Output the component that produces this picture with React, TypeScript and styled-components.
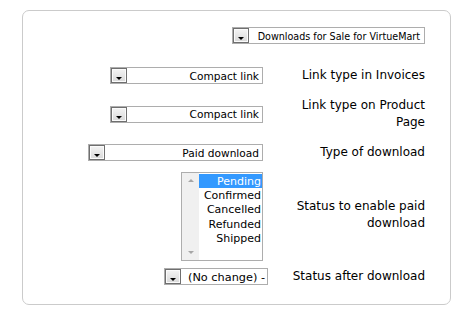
import React from "react";
import styled, { createGlobalStyle } from "styled-components";

const Global = createGlobalStyle`
  html, body { margin: 0; padding: 0; background: #fff; }
  body { font-family: "DejaVu Sans", "Liberation Sans", sans-serif; color: #000; }
`;

const Panel = styled.div`
  box-sizing: border-box;
  width: 429px;
  height: 295px;
  margin: 10px 0 0 22px;
  border: 1px solid #cbcbcb;
  border-radius: 7px;
  padding: 16px 25px 0 0;
  display: flex;
  flex-direction: column;
`;

const TopRow = styled.div`
  display: flex;
  justify-content: flex-end;
`;

const Row = styled.div<{ $mt: number }>`
  display: grid;
  grid-template-columns: 245px 1fr;
  column-gap: 16px;
  align-items: center;
  margin-top: ${(p) => p.$mt}px;
`;

const FieldCell = styled.div<{ $pr: number }>`
  display: flex;
  justify-content: flex-end;
  padding-right: ${(p) => p.$pr}px;
`;

const Label = styled.div<{ $lift?: number }>`
  font-size: 12px;
  line-height: 17px;
  text-align: right;
  margin-bottom: ${(p) => (p.$lift ? p.$lift * 2 : 0)}px;
`;

const SelectBox = styled.div<{ $w: number }>`
  box-sizing: border-box;
  width: ${(p) => p.$w}px;
  height: 17px;
  border: 1px solid #adadad;
  background: #fff;
  display: flex;
  align-items: center;
`;

const DropButton = styled.span`
  box-sizing: border-box;
  flex: none;
  width: 16px;
  height: 15px;
  border: 1px solid #6f6f6f;
  box-shadow: inset 0 0 0 1px #fbfbfb;
  background: linear-gradient(#f4f4f4, #d9d9d9);
  display: flex;
  justify-content: center;
  align-items: flex-end;
  padding-bottom: 2px;
`;

const DownArrow = styled.span`
  width: 0;
  height: 0;
  border-left: 3px solid transparent;
  border-right: 3px solid transparent;
  border-top: 3px solid #000;
`;

const SelectValue = styled.span<{ $size: number; $pr: number }>`
  flex: 1;
  min-width: 0;
  text-align: right;
  font-size: ${(p) => p.$size}px;
  line-height: 15px;
  white-space: nowrap;
  overflow: hidden;
  padding-right: ${(p) => p.$pr}px;
  padding-top: 1px;
`;

const ListBox = styled.div`
  box-sizing: border-box;
  width: 82px;
  height: 89px;
  border: 1px solid #adadad;
  background: #fff;
  display: flex;
`;

const ScrollTrack = styled.div`
  flex: none;
  width: 17px;
  background: #f0f0f0;
  display: flex;
  flex-direction: column;
  justify-content: space-between;
  align-items: center;
  padding: 6px 0 6px;
  box-sizing: border-box;
`;

const ScrollArrow = styled.span<{ $dir: "up" | "down" }>`
  width: 0;
  height: 0;
  border-left: 3px solid transparent;
  border-right: 3px solid transparent;
  ${(p) =>
    p.$dir === "up"
      ? "border-bottom: 3px solid #a6a6a6;"
      : "border-top: 3px solid #a6a6a6;"}
`;

const Options = styled.div`
  flex: 1;
  display: flex;
  flex-direction: column;
  padding-top: 1px;
`;

const Option = styled.div<{ $selected?: boolean }>`
  height: 14.2px;
  line-height: 15px;
  font-size: 11px;
  text-align: right;
  padding-right: 1px;
  white-space: nowrap;
  background: ${(p) => (p.$selected ? "#3399ff" : "transparent")};
  color: ${(p) => (p.$selected ? "#fff" : "#000")};
`;

function Select({ width, value, size = 10.6, pr = 3 }: { width: number; value: string; size?: number; pr?: number }) {
  return (
    <SelectBox $w={width}>
      <DropButton>
        <DownArrow />
      </DropButton>
      <SelectValue $size={size} $pr={pr}>{value}</SelectValue>
    </SelectBox>
  );
}

const statuses = ["Pending", "Confirmed", "Cancelled", "Refunded", "Shipped"];

export default function App() {
  return (
    <>
      <Global />
      <Panel>
        <TopRow>
          <Select width={193} value="Downloads for Sale for VirtueMart" size={9.6} pr={4} />
        </TopRow>
        <Row $mt={23}>
          <FieldCell $pr={5}>
            <Select width={153} value="Compact link" />
          </FieldCell>
          <Label>Link type in Invoices</Label>
        </Row>
        <Row $mt={13}>
          <FieldCell $pr={5}>
            <Select width={153} value="Compact link" />
          </FieldCell>
          <Label>Link type on Product Page</Label>
        </Row>
        <Row $mt={13}>
          <FieldCell $pr={5}>
            <Select width={175} value="Paid download" />
          </FieldCell>
          <Label>Type of download</Label>
        </Row>
        <Row $mt={11}>
          <FieldCell $pr={5}>
            <ListBox>
              <ScrollTrack>
                <ScrollArrow $dir="up" />
                <ScrollArrow $dir="down" />
              </ScrollTrack>
              <Options>
                {statuses.map((s, i) => (
                  <Option key={s} $selected={i === 0}>{s}</Option>
                ))}
              </Options>
            </ListBox>
          </FieldCell>
          <Label $lift={2}>Status to enable paid download</Label>
        </Row>
        <Row $mt={7}>
          <FieldCell $pr={0}>
            <Select width={104} value="(No change) -" size={11.3} pr={2} />
          </FieldCell>
          <Label>Status after download</Label>
        </Row>
      </Panel>
    </>
  );
}
